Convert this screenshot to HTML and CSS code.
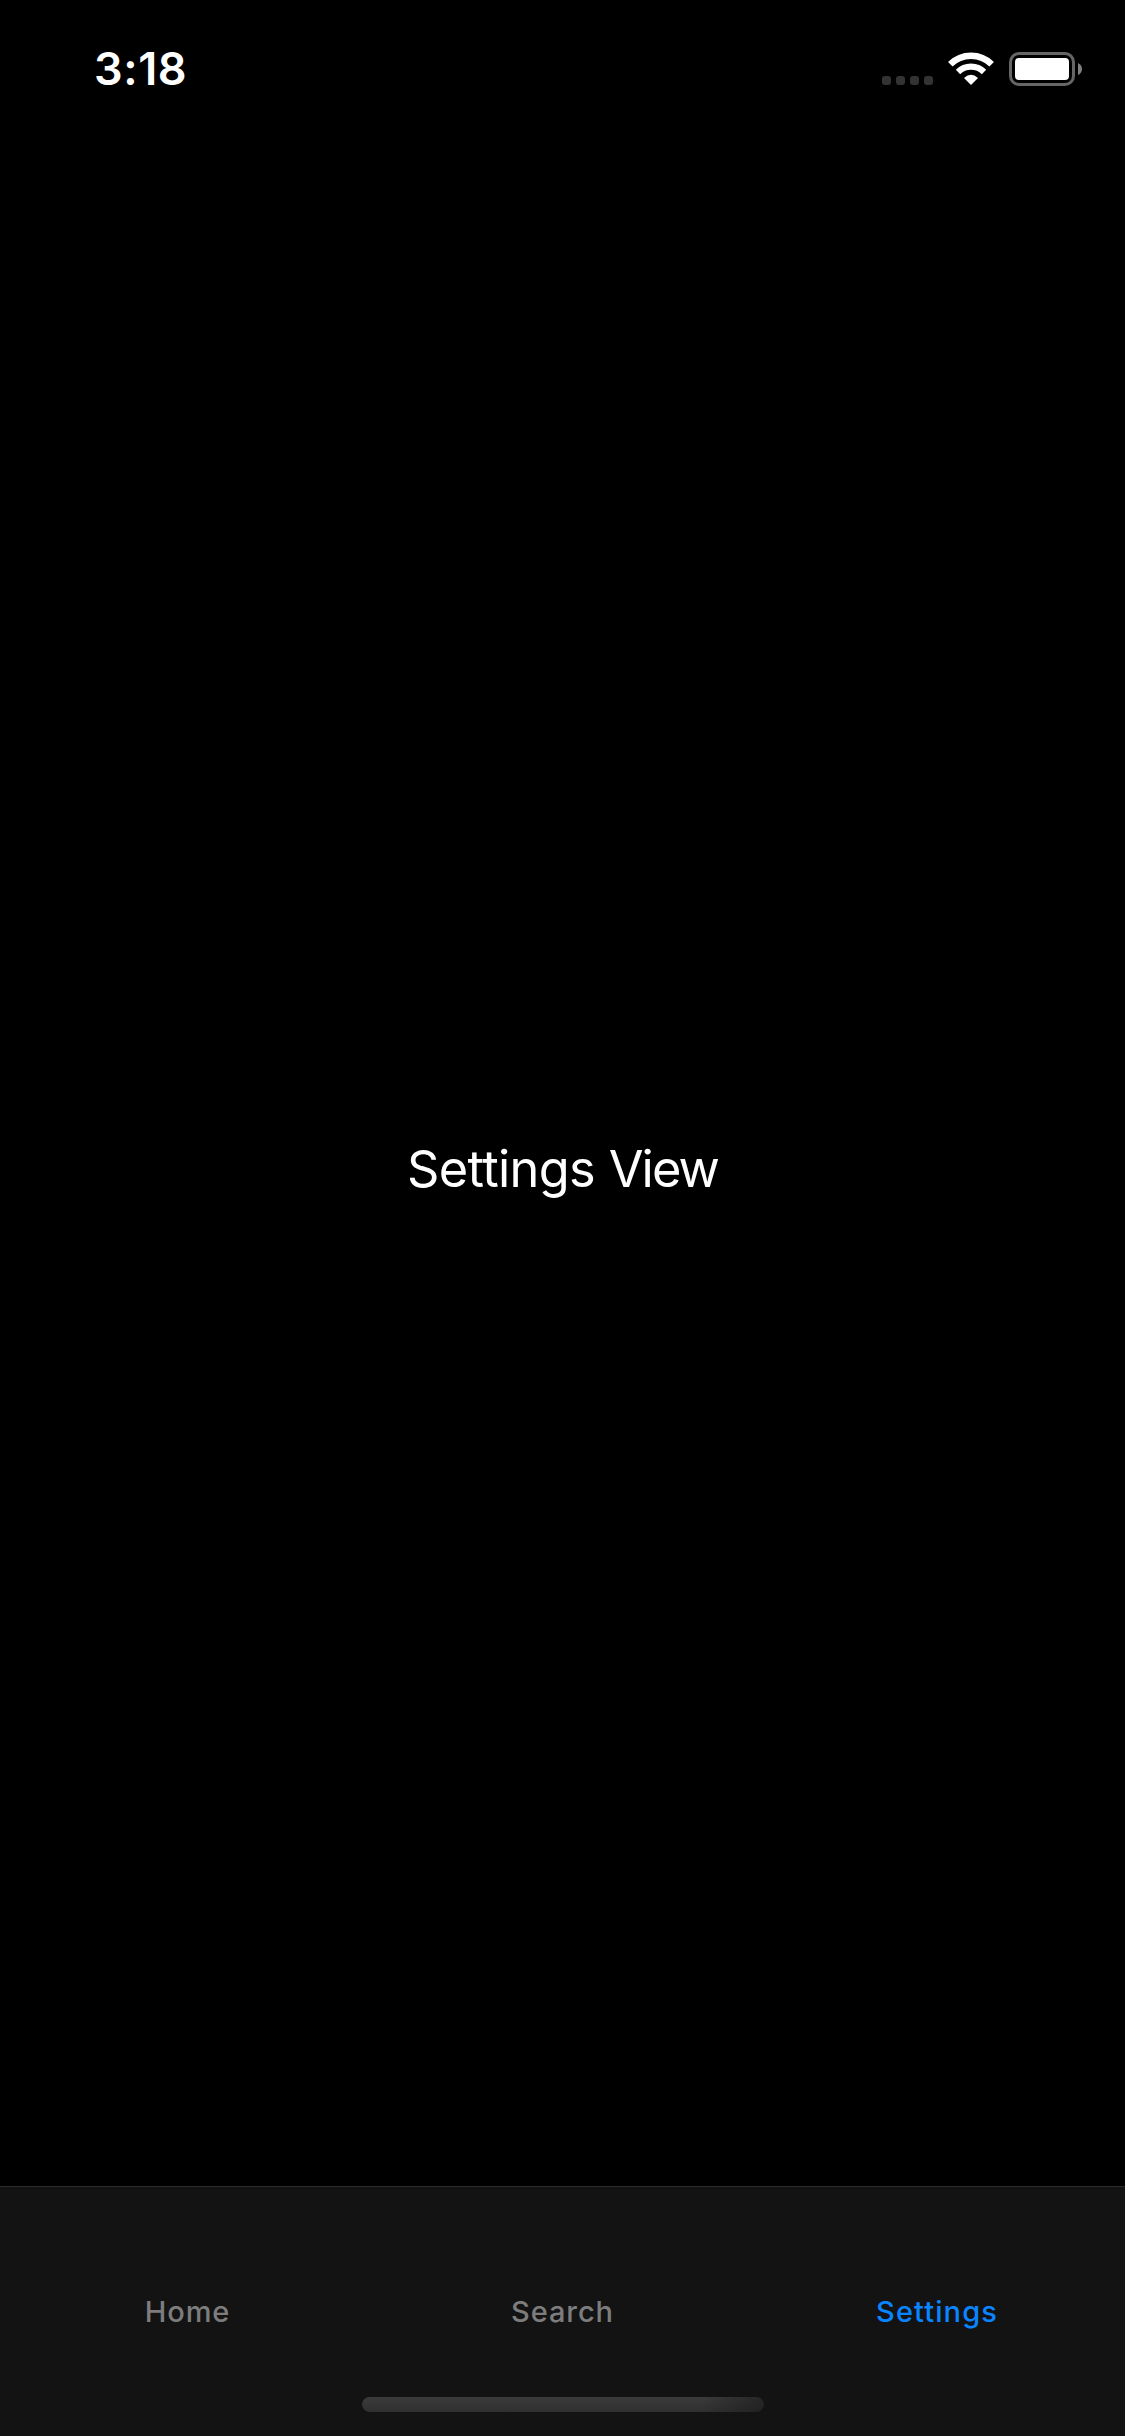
FILE: index.html
```html
<!DOCTYPE html>
<html lang="en">
<head>
<meta charset="utf-8">
<title>Settings</title>
<link rel="stylesheet" href="styles.css">
</head>
<body>
<div class="screen">
  <header class="status-bar">
    <span class="time">3:18</span>
    <div class="indicators">
      <div class="signal"><i class="dot"></i><i class="dot"></i><i class="dot"></i><i class="dot"></i></div>
      <svg class="wifi" width="46" height="34" viewBox="0 0 46 34" fill="none" stroke="#fff">
        <path d="M2.3 12.3A29.3 29.3 0 0 1 43.7 12.3" stroke-width="6.4"/>
        <path d="M10 20A18.4 18.4 0 0 1 36 20" stroke-width="6.2"/>
        <path d="M23 33L16 26Q23 19.4 30 26Z" fill="#fff" stroke="none"/>
      </svg>
      <svg class="battery" width="73" height="34" viewBox="0 0 73 34">
        <rect x="1.5" y="1.5" width="63" height="31" rx="8.5" fill="none" stroke="#666" stroke-width="3"/>
        <rect x="6" y="6" width="54" height="22" rx="4" fill="#fff"/>
        <path d="M69 11Q73 13 73 17T69 23Z" fill="#808080"/>
      </svg>
    </div>
  </header>
  <main class="content"><p class="title">Settings <span class="title-tight">View</span></p></main>
  <footer class="bottom">
    <nav class="tabs">
      <a class="tab">Home</a>
      <a class="tab">Search</a>
      <a class="tab tab-active">Settings</a>
    </nav>
    <div class="home-indicator"></div>
  </footer>
</div>
</body>
</html>
```
FILE: styles.css
```css
* { box-sizing: border-box; }
body {
  margin: 0;
  background: #000;
  color: #fff;
  font-family: Inter, "Liberation Sans", sans-serif;
}
.screen {
  display: flex;
  flex-direction: column;
  height: 2436px;
}
.status-bar {
  display: flex;
  justify-content: space-between;
  align-items: flex-start;
  height: 132px;
  padding: 52px 43px 0 94px;
}
.time {
  font-size: 45px;
  font-weight: 600;
  line-height: 34px;
  letter-spacing: 0.6px;
}
.indicators { display: flex; align-items: flex-end; }
.signal { display: flex; gap: 5px; margin: 0 15px 1px 0; }
.dot { width: 9px; height: 9px; border-radius: 3px; background: #333; }
.wifi { margin-right: 15px; }
.content {
  flex: 1;
  display: flex;
  align-items: center;
  justify-content: center;
  padding-top: 20px;
}
.title {
  margin: 0;
  font-size: 50.5px;
  line-height: 62px;
  letter-spacing: -0.65px;
}
.title-tight { letter-spacing: -1.9px; }
.bottom {
  height: 250px;
  border-top: 1px solid #2c2c2c;
  background: #131313;
  display: flex;
  flex-direction: column;
  align-items: center;
}
.tabs {
  display: grid;
  grid-template-columns: repeat(3, 1fr);
  width: 100%;
  height: 210px;
  padding-top: 107px;
}
.tab {
  text-align: center;
  font-size: 29px;
  font-weight: 500;
  line-height: 36px;
  letter-spacing: 0.9px;
  color: #7d7d7d;
}
.tab-active {
  color: #0a84ff;
  letter-spacing: 1.1px;
  padding-right: 1px;
}
.home-indicator {
  width: 402px;
  height: 15px;
  border-radius: 8px;
  background: linear-gradient(100deg, transparent 84%, rgba(25, 25, 25, .65)), linear-gradient(#3b3b3b, #303030);
}
```
